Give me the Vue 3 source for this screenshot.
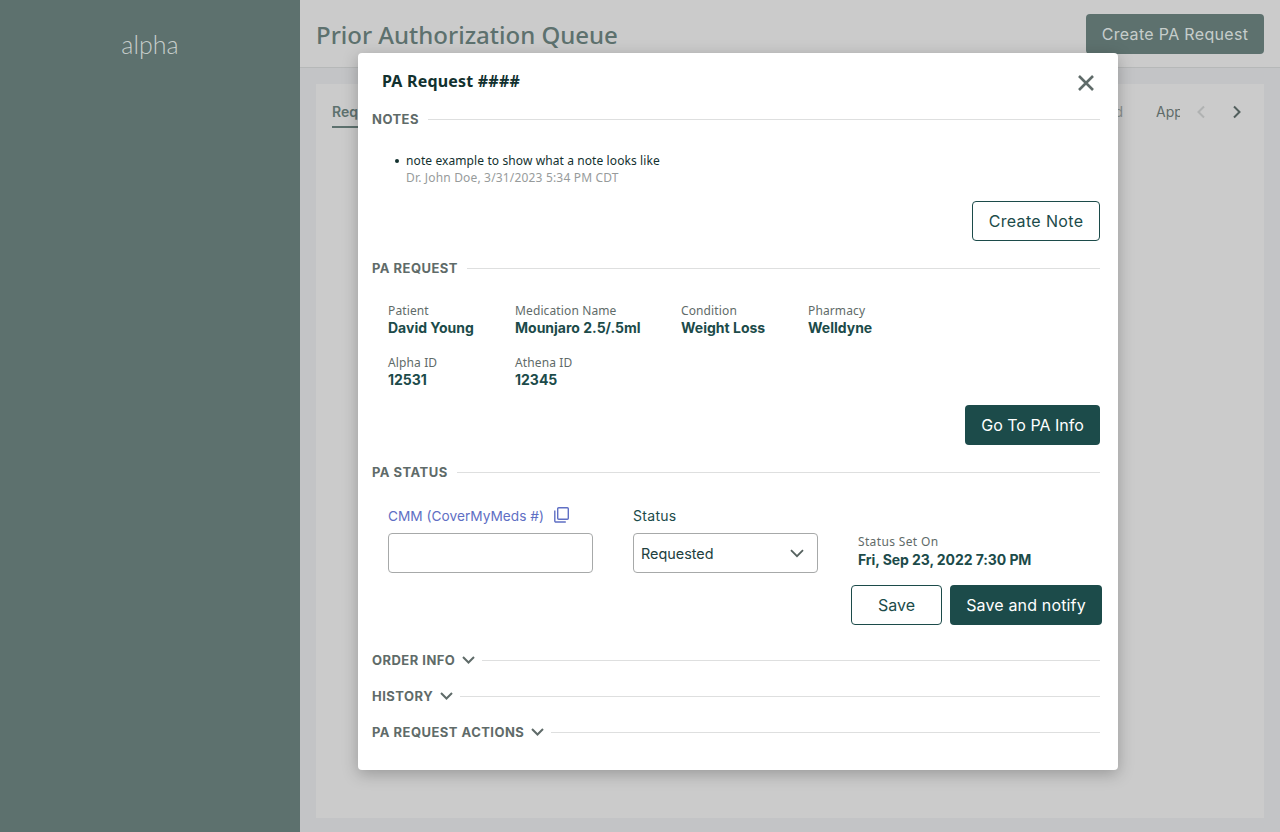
<script setup>
const fieldsTop = [
  { label: 'Patient', value: 'David Young' },
  { label: 'Medication Name', value: 'Mounjaro 2.5/.5ml' },
  { label: 'Condition', value: 'Weight Loss' },
  { label: 'Pharmacy', value: 'Welldyne' },
  { label: 'Alpha ID', value: '12531' },
  { label: 'Athena ID', value: '12345' },
]
const collapsed = ['ORDER INFO', 'HISTORY', 'PA REQUEST ACTIONS']
</script>

<template>
  <div class="page">
    <aside class="sidebar">
      <div class="logo">alpha</div>
    </aside>
    <main class="main">
      <header class="topbar">
        <h1 class="page-title">Prior Authorization Queue</h1>
        <button class="create-btn">Create PA Request</button>
      </header>
      <section class="panel">
        <div class="tabs">
          <span class="tab active">Requested</span>
          <span class="tabs-spacer"></span>
          <span class="tab-d">d</span>
          <span class="tab-clip">Approved</span>
          <svg class="tab-chev" width="10" height="14" viewBox="0 0 10 14"><path d="M8 1.5 2.5 7 8 12.5" fill="none" stroke="#b0b2b2" stroke-width="2"/></svg>
          <svg class="tab-chev next" width="10" height="14" viewBox="0 0 10 14"><path d="M2 1.5 7.500 7 2 12.500" fill="none" stroke="#525f5d" stroke-width="2"/></svg>
        </div>
      </section>
    </main>

    <div class="modal">
      <div class="modal-head">
        <h2 class="modal-title">PA Request ####</h2>
        <svg class="close" width="18" height="18" viewBox="0 0 18 18"><path d="M2 2 16 16M16 2 2 16" stroke="#5f6b69" stroke-width="2.600" fill="none"/></svg>
      </div>

      <div class="sec-head first"><span>NOTES</span><i></i></div>
      <ul class="notes">
        <li>
          <div class="note-text">note example to show what a note looks like</div>
          <div class="note-meta">Dr. John Doe, 3/31/2023 5:34 PM CDT</div>
        </li>
      </ul>
      <div class="actions a-note"><button class="btn outline note-btn">Create Note</button></div>

      <div class="sec-head req"><span>PA REQUEST</span><i></i></div>
      <div class="info-grid">
        <div v-for="f in fieldsTop" :key="f.label" class="info">
          <div class="info-label">{{ f.label }}</div>
          <div class="info-value">{{ f.value }}</div>
        </div>
      </div>
      <div class="actions a-info"><button class="btn solid info-btn">Go To PA Info</button></div>

      <div class="sec-head status"><span>PA STATUS</span><i></i></div>
      <div class="status-row">
        <div class="cmm">
          <div class="cmm-label">
            <span>CMM (CoverMyMeds #)</span>
            <svg width="15" height="16" viewBox="0 0 15 16" fill="none" stroke="#5f6fc4" stroke-width="1.400"><rect x="3.700" y="0.700" width="10.600" height="11.600" rx="1"/><path d="M.8 3.500V14a1 1 0 0 0 1 1h10"/></svg>
          </div>
          <input class="text-input" type="text" />
        </div>
        <div class="stat">
          <div class="stat-label">Status</div>
          <div class="select">
            <span>Requested</span>
            <svg width="14" height="9" viewBox="0 0 14 9"><path d="M1 1.200 7 7.200 13 1.200" fill="none" stroke="#56625f" stroke-width="1.800"/></svg>
          </div>
        </div>
        <div class="set-on">
          <div class="info-label wide">Status Set On</div>
          <div class="info-value date">Fri, Sep 23, 2022 7:30 PM</div>
        </div>
      </div>
      <div class="actions a-save">
        <button class="btn outline save-btn">Save</button>
        <button class="btn solid notify-btn">Save and notify</button>
      </div>

      <div v-for="c in collapsed" :key="c" class="sec-head coll">
        <span>{{ c }}</span>
        <svg width="13" height="8" viewBox="0 0 13 8"><path d="M1 1 6.500 6.500 12 1" fill="none" stroke="#5f6b69" stroke-width="2"/></svg>
        <i></i>
      </div>
    </div>
  </div>
</template>

<style>
html, body { margin: 0; }
</style>

<style scoped>
* { box-sizing: border-box; }
.page {
  position: relative;
  display: flex;
  width: 1280px;
  height: 832px;
  overflow: hidden;
  background: #c3c4c6;
  font-family: Inter, "Noto Sans", sans-serif;
}
.sidebar {
  width: 300px;
  flex: none;
  background: #5d716e;
  display: flex;
  justify-content: center;
  padding-top: 29px;
}
.logo {
  font-family: Lato, sans-serif;
  font-weight: 300;
  font-size: 25px;
  line-height: 30px;
  color: #c6cdcb;
  height: 30px;
}
.main { flex: 1; display: flex; flex-direction: column; }
.topbar {
  height: 68px;
  background: #cbcbcb;
  border-bottom: 1px solid #b6b8b8;
  display: flex;
  align-items: flex-start;
  justify-content: space-between;
  padding: 14px 16px 0;
}
.page-title {
  margin: 6px 0 0;
  font-family: "Noto Sans", sans-serif;
  font-weight: 500;
  font-size: 24px;
  line-height: 30px;
  color: #5d716e;
}
.create-btn {
  width: 178px;
  height: 40px;
  border: 0;
  border-radius: 4px;
  background: #5d716e;
  color: #c6cdcb;
  font: 400 16px Inter, sans-serif;
  letter-spacing: .33px;
}
.panel {
  margin: 16px 16px 14px;
  flex: 1;
  background: #cbcbcb;
}
.tabs {
  display: flex;
  align-items: center;
  height: 44px;
  padding-left: 16px;
  font-size: 14px;
  color: #5d716e;
}
.tab.active {
  font-weight: 600;
  height: 44px;
  line-height: 55px;
  border-bottom: 2px solid #5d716e;
  width: 90px;
  white-space: nowrap;
  overflow: hidden;
}
.tabs-spacer { flex: 1; }
.tab-d { color: #8a9190; margin-right: 33px; padding-top: 11px; }
.tab-clip { width: 24px; overflow: hidden; white-space: nowrap; color: #5f6b69; padding-top: 11px; }
.tab-chev { margin: 11px 0 0 16px; }
.tab-chev.next { margin: 11px 22px 0 26px; }

.modal {
  position: absolute;
  left: 358px;
  top: 53px;
  width: 760px;
  height: 717px;
  background: #fff;
  border-radius: 4px;
  box-shadow: 0 4px 16px rgba(0, 0, 0, .25);
  padding: 0 18px 0 14px;
  color: #1c4b4a;
}
.modal-head {
  display: flex;
  justify-content: space-between;
  align-items: center;
  height: 56px;
  padding: 2px 0 0 10px;
}
.modal-title {
  margin: 0;
  font-family: "Noto Sans", sans-serif;
  font-weight: 700;
  font-size: 16px;
  letter-spacing: .2px;
  line-height: 20px;
  color: #12312f;
  position: relative;
  top: -1px;
}
.close { margin-right: 5px; position: relative; top: 1px; }
.sec-head {
  display: flex;
  align-items: center;
  gap: 9px;
  height: 20px;
  font-size: 13px;
  font-weight: 700;
  font-family: Inter, sans-serif;
  letter-spacing: .47px;
  color: #5f6b69;
}
.sec-head i { flex: 1; height: 1px; background: #dedfdf; }
.notes {
  margin: 23px 0 0;
  padding: 0 0 0 34px;
  list-style: none;
}
.notes li { position: relative; }
.notes li::before {
  content: "";
  position: absolute;
  left: -11px;
  top: 7px;
  width: 4px;
  height: 4px;
  border-radius: 50%;
  background: #12312f;
}
.note-text {
  font-family: "Noto Sans", sans-serif;
  font-size: 12px;
  letter-spacing: .1px;
  line-height: 18px;
  color: #12312f;
}
.note-meta {
  font-family: "Noto Sans", sans-serif;
  font-size: 12px;
  letter-spacing: .17px;
  line-height: 16px;
  color: #979b9b;
}
.actions { display: flex; justify-content: flex-end; gap: 8px; }
.a-note { margin-top: 15px; }
.btn {
  height: 40px;
  border-radius: 4px;
  font: 400 16px Inter, sans-serif;
}
.outline { background: #fff; border: 1px solid #1c4b4a; color: #1c4b4a; }
.solid { background: #1c4b4a; border: 0; color: #fff; }
.note-btn { width: 128px; letter-spacing: .35px; }
.info-btn { width: 135px; }
.sec-head.req { margin-top: 17px; }
.info-grid {
  display: grid;
  grid-template-columns: 127px 166px 127px auto;
  row-gap: 17px;
  padding: 24px 0 0 16px;
}
.info-label {
  font-family: "Noto Sans", sans-serif;
  font-size: 12px;
  letter-spacing: .12px;
  line-height: 17px;
  color: #5f6b69;
}
.info-label.wide { letter-spacing: .35px; line-height: 18px; }
.info-value {
  font-family: Inter, sans-serif;
  font-weight: 700;
  font-size: 14px;
  line-height: 18px;
  color: #1c4b4a;
  white-space: nowrap;
}
.info-value.date { letter-spacing: -.08px; }
.a-info { margin-top: 16px; }
.sec-head.status { margin-top: 17px; }
.status-row {
  display: flex;
  padding: 24px 0 0 16px;
}
.cmm { width: 205px; }
.cmm-label {
  display: flex;
  align-items: center;
  gap: 10px;
  height: 20px;
  font-size: 13.700px;
  color: #5f6fc4;
}
.cmm-label svg { position: relative; top: -1px; }
.text-input {
  display: block;
  width: 205px;
  height: 40px;
  margin-top: 7px;
  border: 1px solid #a7a9a9;
  border-radius: 4px;
  background: #fff;
  outline: none;
}
.stat { width: 185px; margin-left: 40px; }
.stat-label {
  height: 20px;
  line-height: 20px;
  font-size: 14px;
  letter-spacing: .3px;
  color: #1c4b4a;
}
.select {
  display: flex;
  align-items: center;
  justify-content: space-between;
  height: 40px;
  margin-top: 7px;
  padding: 1px 13px 0 7px;
  border: 1px solid #a7a9a9;
  border-radius: 4px;
  font-size: 14.400px;
  color: #21403e;
}
.set-on { margin-left: 40px; padding-top: 27px; }
.a-save { margin: 12px -2px 0 0; }
.save-btn { width: 91px; }
.notify-btn { width: 152px; letter-spacing: .15px; }
.sec-head.coll { margin-top: 16px; gap: 7px; }
.a-save + .sec-head.coll { margin-top: 25px; }
</style>
